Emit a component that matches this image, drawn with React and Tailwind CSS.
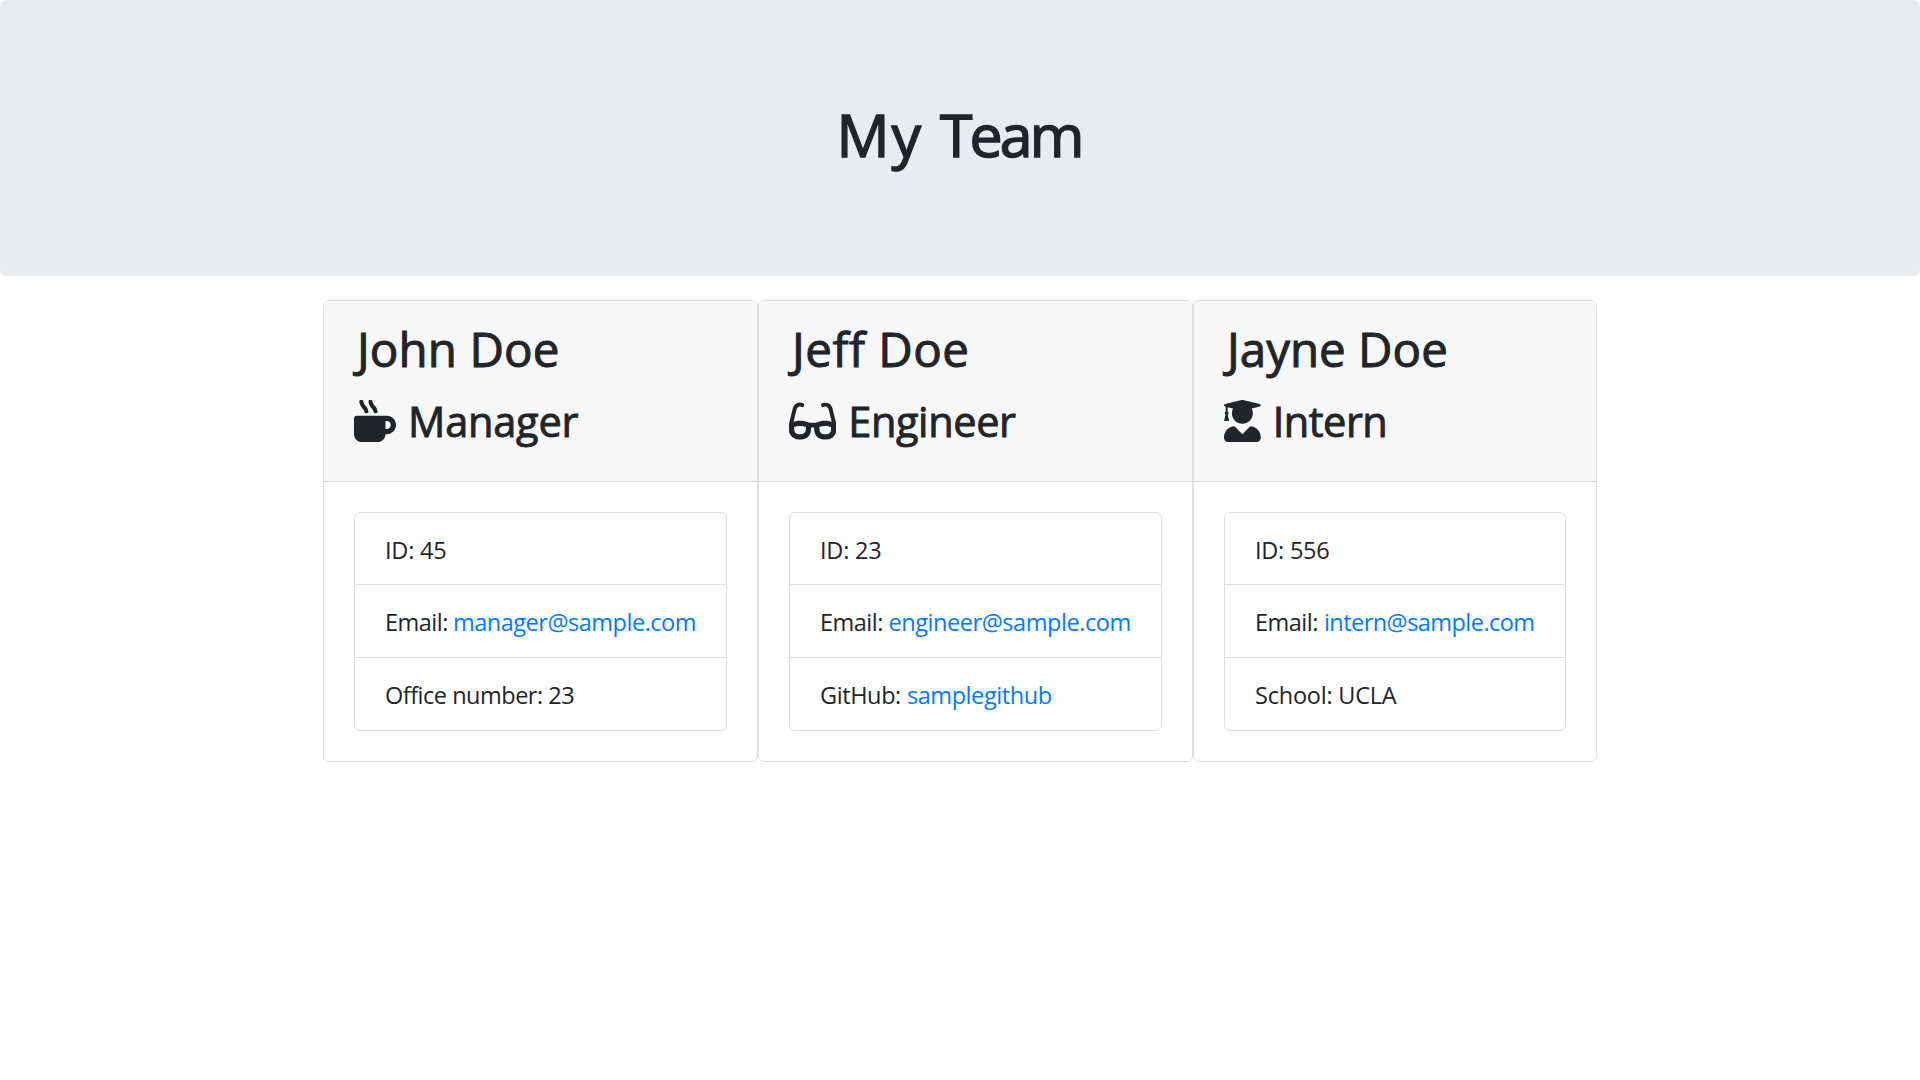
import { FaMugHot, FaGlasses, FaUserGraduate } from "react-icons/fa";

const team = [
  {
    name: "John Doe",
    nameClass: "tracking-[0.1px]",
    role: "Manager",
    roleClass: "tracking-[-0.2px] ml-[12px]",
    icon: <FaMugHot className="mt-[0.4px] h-[42px] w-[42px]" />,
    width: "w-[435px]",
    rows: [
      { label: "ID: 45", labelClass: "tracking-[-0.2px]" },
      { label: "Email:", labelClass: "tracking-[-0.5px]", link: "manager@sample.com", linkClass: "ml-[5px] tracking-[-0.48px]" },
      { label: "Office number: 23", labelClass: "tracking-[-0.49px]" },
    ],
  },
  {
    name: "Jeff Doe",
    nameClass: "tracking-[0.5px]",
    role: "Engineer",
    roleClass: "tracking-[-0.4px] ml-[12px]",
    icon: <FaGlasses className="mt-[0.4px] h-[42px] w-[47.25px]" />,
    width: "w-[435px]",
    rows: [
      { label: "ID: 23", labelClass: "tracking-[-0.2px]" },
      { label: "Email:", labelClass: "tracking-[-0.5px]", link: "engineer@sample.com", linkClass: "ml-[5.5px] tracking-[-0.43px]" },
      { label: "GitHub:", labelClass: "tracking-[-0.4px]", link: "samplegithub", linkClass: "ml-[6px] tracking-[-0.42px]" },
    ],
  },
  {
    name: "Jayne Doe",
    nameClass: "tracking-[0px]",
    role: "Intern",
    roleClass: "tracking-[-0.5px] ml-[12px]",
    icon: <FaUserGraduate className="mt-[0.4px] h-[42px] w-[36.75px]" />,
    width: "w-[404px]",
    rows: [
      { label: "ID: 556", labelClass: "tracking-[-0.25px]" },
      { label: "Email:", labelClass: "tracking-[-0.5px]", link: "intern@sample.com", linkClass: "ml-[6px] tracking-[-0.54px]" },
      { label: "School: UCLA", labelClass: "tracking-[-0.22px]" },
    ],
  },
];

function Card({ member }) {
  return (
    <article className={`${member.width} h-[462px] overflow-hidden rounded-[6px] border border-[#dfdfdf] bg-white`}>
      <header className="h-[181px] border-b border-[#d8d8d8] bg-[#f7f7f7] px-[30px] pt-[19px]">
        <h2 className={`ml-[3px] h-[58px] text-[47.5px] leading-[58px] [-webkit-text-stroke:1px_#212529] ${member.nameClass}`}>
          {member.name}
        </h2>
        <h3 className="mt-[18px] flex h-[50px] items-center text-[41.5px] leading-[50px]">
          {member.icon}
          <span className={`[-webkit-text-stroke:0.9px_#212529] ${member.roleClass}`}>{member.role}</span>
        </h3>
      </header>
      <div className="p-[30px]">
        <ul className="divide-y divide-[#dfdfdf] rounded-[6px] border border-[#dfdfdf]">
          {member.rows.map((row) => (
            <li key={row.label} className="flex h-[73px] items-center px-[30px] pt-[2px] text-[23.5px] leading-[36px] whitespace-nowrap first:h-[72px] last:h-[72px]">
              <span className={row.labelClass}>{row.label}</span>
              {row.link && (
                <a href="#" className={`text-[#007bff] ${row.linkClass}`}>
                  {row.link}
                </a>
              )}
            </li>
          ))}
        </ul>
      </div>
    </article>
  );
}

export default function App() {
  return (
    <div className="min-h-screen bg-white font-['Open_Sans','Noto_Sans',sans-serif] text-[#212529]">
      <div className="mb-[24px] flex h-[276px] justify-center rounded-[7px] bg-[#e9ecef] pt-[98px]">
        <h1 className="mr-[2px] text-[59px] leading-[72px] [-webkit-text-stroke:1.5px_#212529]">
          <span className="tracking-[1.8px]">My </span>
          <span className="tracking-[-2.9px]">Team</span>
        </h1>
      </div>
      <main className="flex justify-center">
        {team.map((member) => (
          <Card key={member.name} member={member} />
        ))}
      </main>
    </div>
  );
}
